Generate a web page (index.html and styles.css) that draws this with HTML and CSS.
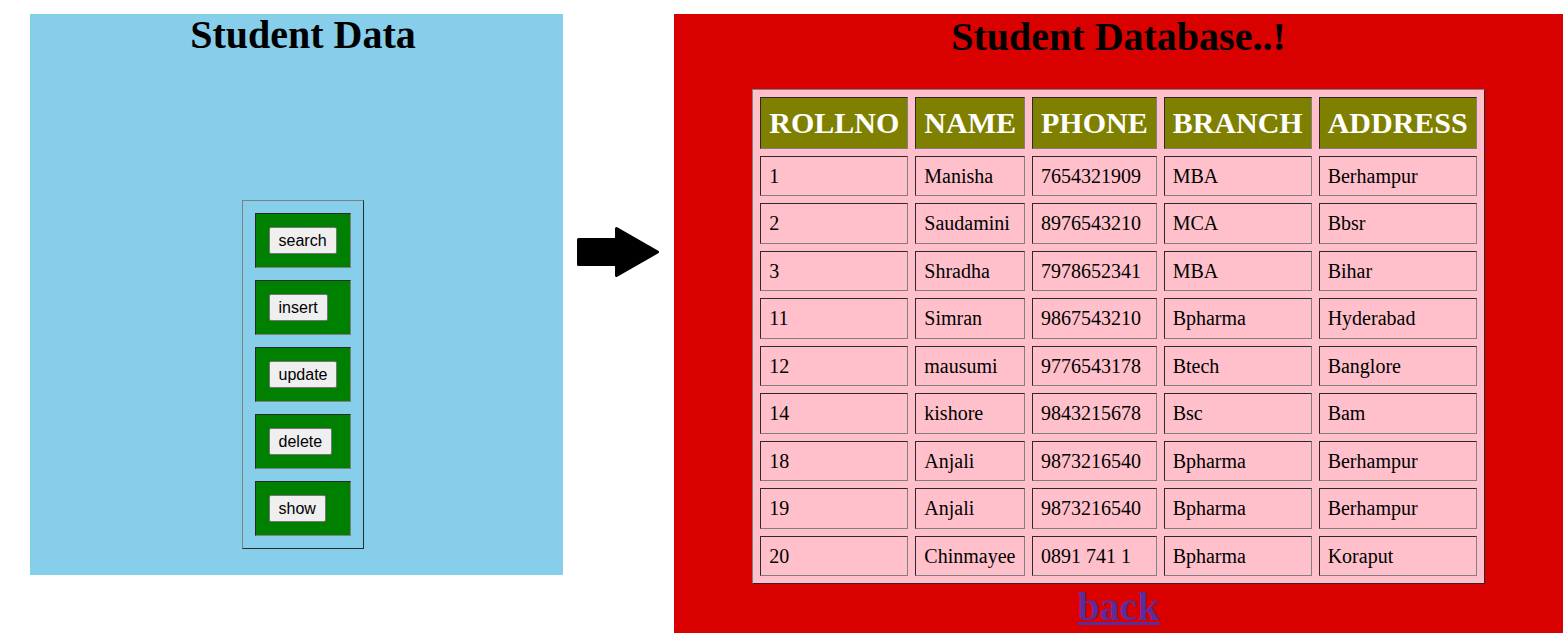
FILE: index.html
```html
<!DOCTYPE html>
<html>
<head>
<meta charset="utf-8">
<title>Student Data</title>
<link rel="stylesheet" href="styles.css">
</head>
<body>
<div class="page">
  <section class="left">
    <h1 class="left-title">Student Data</h1>
    <table class="menu">
      <tr><td><button class="btn">search</button></td></tr>
      <tr><td><button class="btn">insert</button></td></tr>
      <tr><td><button class="btn">update</button></td></tr>
      <tr><td><button class="btn">delete</button></td></tr>
      <tr><td><button class="btn">show</button></td></tr>
    </table>
  </section>
  <div class="arrow">
    <svg width="82" height="50" viewBox="0 0 82 50">
      <polygon points="1.5,12.5 39.5,12.5 39.5,1.5 80.5,25 39.5,48.5 39.5,37.5 1.5,37.5" fill="#000" stroke="#000" stroke-width="3" stroke-linejoin="round"/>
    </svg>
  </div>
  <section class="right">
    <h1 class="right-title">Student Database..!</h1>
    <table class="data">
      <tr><th>ROLLNO</th><th>NAME</th><th>PHONE</th><th>BRANCH</th><th>ADDRESS</th></tr>
      <tr><td>1</td><td>Manisha</td><td>7654321909</td><td>MBA</td><td>Berhampur</td></tr>
      <tr><td>2</td><td>Saudamini</td><td>8976543210</td><td>MCA</td><td>Bbsr</td></tr>
      <tr><td>3</td><td>Shradha</td><td>7978652341</td><td>MBA</td><td>Bihar</td></tr>
      <tr><td>11</td><td>Simran</td><td>9867543210</td><td>Bpharma</td><td>Hyderabad</td></tr>
      <tr><td>12</td><td>mausumi</td><td>9776543178</td><td>Btech</td><td>Banglore</td></tr>
      <tr><td>14</td><td>kishore</td><td>9843215678</td><td>Bsc</td><td>Bam</td></tr>
      <tr><td>18</td><td>Anjali</td><td>9873216540</td><td>Bpharma</td><td>Berhampur</td></tr>
      <tr><td>19</td><td>Anjali</td><td>9873216540</td><td>Bpharma</td><td>Berhampur</td></tr>
      <tr><td>20</td><td>Chinmayee</td><td>0891 741 1</td><td>Bpharma</td><td>Koraput</td></tr>
    </table>
    <a class="back" href="#">back</a>
  </section>
</div>
</body>
</html>
```
FILE: styles.css
```css
html, body {
  margin: 0;
  padding: 0;
  overflow: hidden;
  background: #fff;
  font-family: "Liberation Serif", "Times New Roman", serif;
}

.page {
  display: flex;
  align-items: flex-start;
  padding: 14px 0 0 30px;
}

.left {
  box-sizing: border-box;
  width: 533px;
  height: 561px;
  padding-left: 13px;
  background: #87ceeb;
  text-align: center;
}

.left-title {
  margin: 0;
  font-size: 40px;
  line-height: 41px;
  font-weight: bold;
  color: #000;
}

.menu {
  margin: 145px auto 0;
  border-spacing: 12px;
  border: 1px solid;
  border-color: #808080 #2a2a2a #2a2a2a #808080;
}

.menu td {
  padding: 13px;
  background: #008000;
  border: 1px solid;
  border-color: #2a2a2a #808080 #808080 #2a2a2a;
  text-align: left;
}

.btn {
  display: block;
  box-sizing: border-box;
  height: 27px;
  margin: 0;
  padding: 0 9px;
  font-family: "Liberation Sans", Arial, sans-serif;
  font-size: 16px;
  line-height: 25px;
  color: #000;
  background: #efefef;
  border: 1px solid #767676;
  border-radius: 2px;
}

.arrow {
  margin: 213px 0 0 14px;
  width: 82px;
  height: 50px;
}

.arrow svg {
  display: block;
}

.right {
  margin-left: 15px;
  width: 889px;
  height: 619px;
  overflow: hidden;
  background: #d90000;
  text-align: center;
}

.right-title {
  margin: 0;
  font-size: 40px;
  line-height: 46px;
  font-weight: bold;
  color: #000;
}

.data {
  margin: 29px auto 0;
  border-spacing: 7px;
  background: #ffc0cb;
  border: 1px solid;
  border-color: #808080 #2a2a2a #2a2a2a #808080;
}

.data th,
.data td {
  padding: 8px;
  text-align: left;
  border: 1px solid;
  border-color: #2a2a2a #808080 #808080 #2a2a2a;
}

.data th {
  background: #808000;
  color: #fff;
  font-size: 30px;
  line-height: 33.5px;
  font-weight: bold;
}

.data td {
  font-size: 20px;
  line-height: 22.5px;
  color: #000;
}

.back {
  display: inline-block;
  font-size: 40px;
  line-height: 46px;
  font-weight: bold;
  color: #5b2c9c;
  text-decoration: underline;
  text-decoration-thickness: 3px;
}
```
